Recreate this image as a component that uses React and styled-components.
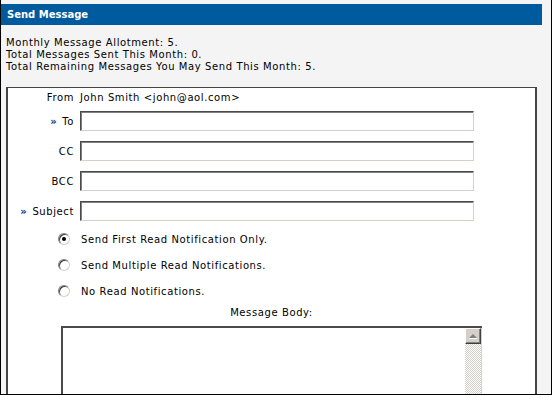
import React from 'react';
import styled, { createGlobalStyle, css } from 'styled-components';

const GlobalStyle = createGlobalStyle`
  html, body {
    margin: 0;
    padding: 0;
    background: #f4f4f4;
  }
  * {
    box-sizing: border-box;
  }
`;

const Frame = styled.div`
  width: 552px;
  height: 395px;
  overflow: hidden;
  background: #f4f4f4;
  border-left: 1px solid #000;
  border-right: 1px solid #000;
  border-bottom: 1px solid #000;
  padding-top: 4px;
  font-family: 'DejaVu Sans', Verdana, sans-serif;
  font-size: 10px;
  letter-spacing: 0.6px;
  color: #000;
`;

const Header = styled.div`
  height: 21px;
  margin-right: 9px;
  background: #005a9e;
  color: #fff;
  font-weight: bold;
  font-size: 10px;
  letter-spacing: 0;
  line-height: 21px;
  padding-left: 6px;
`;

const Info = styled.div`
  padding: 12px 5px 0;
  line-height: 12px;
`;

const FormBox = styled.div`
  margin: 14px 0 0 5px;
  width: 531px;
  height: 400px;
  background: #fff;
  border: 1px solid #444;
  border-right-width: 2px;
  border-left-width: 2px;
  border-bottom: none;
`;

const Row = styled.div`
  display: grid;
  grid-template-columns: 66px 394px;
  column-gap: 6px;
  align-items: center;
  height: ${(p) => p.h || 30}px;
`;

const Label = styled.div`
  text-align: right;
  white-space: nowrap;
`;

const Req = styled.span`
  color: #0a2f86;
  font-weight: bold;
  margin-right: 5px;
`;

const Field = styled.input`
  width: 394px;
  height: 20px;
  margin: 0;
  padding: 0 3px;
  background: #fff;
  border: 1px solid;
  border-color: #4a4a4a #d4d0c8 #d4d0c8 #4a4a4a;
  box-shadow: inset 1px 1px 0 #808080;
  font: inherit;
  outline: none;
`;

const RadioRow = styled.label`
  display: flex;
  align-items: center;
  height: 26px;
  padding-left: 50px;
  gap: 11px;
`;

const Radio = styled.span`
  width: 12px;
  height: 12px;
  border-radius: 50%;
  border: 1px solid;
  border-color: #808080 #d4d0c8 #d4d0c8 #808080;
  background: #fff;
  box-shadow: inset 1px 1px 0 #404040;
  display: flex;
  align-items: center;
  justify-content: center;
  ${(p) =>
    p.checked &&
    css`
      &::after {
        content: '';
        width: 4px;
        height: 4px;
        border-radius: 50%;
        background: #000;
      }
    `}
`;

const BodyLabel = styled.div`
  text-align: center;
  width: 421px;
  margin-left: 53px;
  height: 22px;
  line-height: 17px;
`;

const BodyArea = styled.div`
  display: flex;
  width: 421px;
  height: 120px;
  margin-left: 53px;
  border-top: 2px solid #4a4a4a;
  border-left: 2px solid #4a4a4a;
  background: #fff;
`;

const BodyText = styled.div`
  flex: 1;
`;

const Scrollbar = styled.div`
  width: 17px;
  display: flex;
  flex-direction: column;
  border-right: 1px solid #d4d0c8;
  background-color: #fff;
  background-image: conic-gradient(#d4d0c8 25%, #fff 0 50%, #d4d0c8 0 75%, #fff 0);
  background-size: 2px 2px;
`;

const ScrollButton = styled.div`
  width: 16px;
  height: 16px;
  background: #d4d0c8;
  border: 1px solid;
  border-color: #fff #404040 #404040 #fff;
  box-shadow: inset -1px -1px 0 #808080;
  display: flex;
  align-items: center;
  justify-content: center;
  &::after {
    content: '';
    width: 0;
    height: 0;
    border-left: 4px solid transparent;
    border-right: 4px solid transparent;
    border-bottom: 4px solid #808080;
    box-shadow: 0 1px 0 #fff;
  }
`;

const recipients = [
  { label: 'To', required: true },
  { label: 'CC' },
  { label: 'BCC' },
  { label: 'Subject', required: true },
];

const receipts = [
  { text: 'Send First Read Notification Only.', checked: true },
  { text: 'Send Multiple Read Notifications.' },
  { text: 'No Read Notifications.' },
];

export default function App() {
  return (
    <>
      <GlobalStyle />
      <Frame>
        <Header>Send Message</Header>
        <Info>
          <div>Monthly Message Allotment: 5.</div>
          <div>Total Messages Sent This Month: 0.</div>
          <div>Total Remaining Messages You May Send This Month: 5.</div>
        </Info>
        <FormBox>
          <Row h={18}>
            <Label>From</Label>
            <div>John Smith &lt;john@aol.com&gt;</div>
          </Row>
          {recipients.map((r) => (
            <Row key={r.label}>
              <Label>
                {r.required && <Req>»</Req>}
                {r.label}
              </Label>
              <Field type="text" />
            </Row>
          ))}
          {receipts.map((r) => (
            <RadioRow key={r.text}>
              <Radio checked={r.checked} />
              {r.text}
            </RadioRow>
          ))}
          <BodyLabel>Message Body:</BodyLabel>
          <BodyArea>
            <BodyText />
            <Scrollbar>
              <ScrollButton />
            </Scrollbar>
          </BodyArea>
        </FormBox>
      </Frame>
    </>
  );
}
